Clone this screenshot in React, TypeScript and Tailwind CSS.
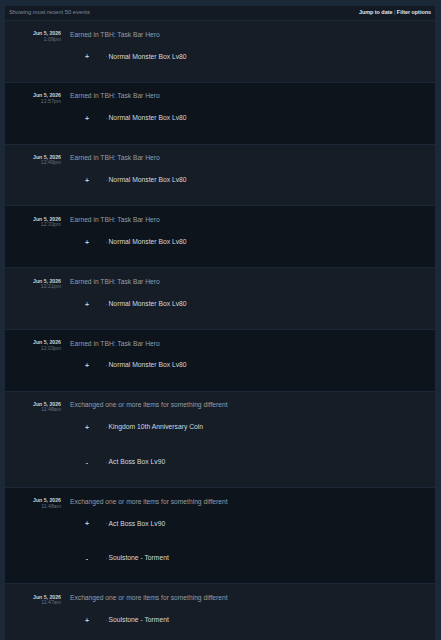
import React from "react";

type Item = { sign: string; name: string };
type Row = { time: string; desc: string; items: Item[] };

const rows: Row[] = [
  { time: "1:09pm", desc: "Earned in TBH: Task Bar Hero", items: [{ sign: "+", name: "Normal Monster Box Lv80" }] },
  { time: "12:57pm", desc: "Earned in TBH: Task Bar Hero", items: [{ sign: "+", name: "Normal Monster Box Lv80" }] },
  { time: "12:49pm", desc: "Earned in TBH: Task Bar Hero", items: [{ sign: "+", name: "Normal Monster Box Lv80" }] },
  { time: "12:33pm", desc: "Earned in TBH: Task Bar Hero", items: [{ sign: "+", name: "Normal Monster Box Lv80" }] },
  { time: "12:21pm", desc: "Earned in TBH: Task Bar Hero", items: [{ sign: "+", name: "Normal Monster Box Lv80" }] },
  { time: "12:03pm", desc: "Earned in TBH: Task Bar Hero", items: [{ sign: "+", name: "Normal Monster Box Lv80" }] },
  {
    time: "11:48am",
    desc: "Exchanged one or more items for something different",
    items: [
      { sign: "+", name: "Kingdom 10th Anniversary Coin" },
      { sign: "-", name: "Act Boss Box Lv90" },
    ],
  },
  {
    time: "11:48am",
    desc: "Exchanged one or more items for something different",
    items: [
      { sign: "+", name: "Act Boss Box Lv90" },
      { sign: "-", name: "Soulstone - Torment" },
    ],
  },
  {
    time: "11:47am",
    desc: "Exchanged one or more items for something different",
    items: [{ sign: "+", name: "Soulstone - Torment" }],
  },
];

export default function App() {
  return (
    <div
      className="h-[640px] overflow-hidden bg-[#1b2838] pt-[6px] pl-[5px] pr-[6px]"
      style={{ fontFamily: '"Liberation Sans", Arial, sans-serif' }}
    >
      <div className="bg-[#0f151d]">
        <div className="flex h-[14px] items-center justify-between bg-[#131a23] pl-[4px] pr-[4px]">
          <span className="text-[5.8px] leading-none text-[#7f8a95]">Showing most recent 50 events</span>
          <span className="text-[5.4px] leading-none font-bold text-[#e3e6e9]">
            Jump to date <span className="font-normal text-[#7f8a95]">|</span> Filter options
          </span>
        </div>
        {rows.map((r, i) => (
          <div
            key={i}
            className={
              "flex border-t border-[#1c2837] pt-[8.6px] pb-[7.6px] " +
              (i % 2 === 0 ? "bg-[#161d27]" : "bg-[#0e141b]")
            }
          >
            <div className="w-[56px] shrink-0 pt-[1.8px] text-right">
              <div className="text-[5.2px] leading-[5.4px] font-bold text-[#c9d1d8]">Jun 5, 2026</div>
              <div className="text-[5.2px] leading-[5.4px] text-[#65707c]">{r.time}</div>
            </div>
            <div className="ml-[9px] flex-1">
              <div className="h-[10px] text-[6.7px] leading-[10px] text-[#949ea8]">{r.desc}</div>
              {r.items.map((it, j) => (
                <div key={j} className="flex h-[34.6px] items-center">
                  <span className="ml-[14px] w-[6px] text-center text-[7px] font-bold leading-none text-[#c6ccd2]">
                    {it.sign}
                  </span>
                  <span className="ml-[15.5px] h-[1px] w-[1px] bg-[#3d4854]" />
                  <span className="ml-[2px] text-[6.75px] leading-none text-[#d2d8de]">{it.name}</span>
                </div>
              ))}
            </div>
          </div>
        ))}
      </div>
    </div>
  );
}
